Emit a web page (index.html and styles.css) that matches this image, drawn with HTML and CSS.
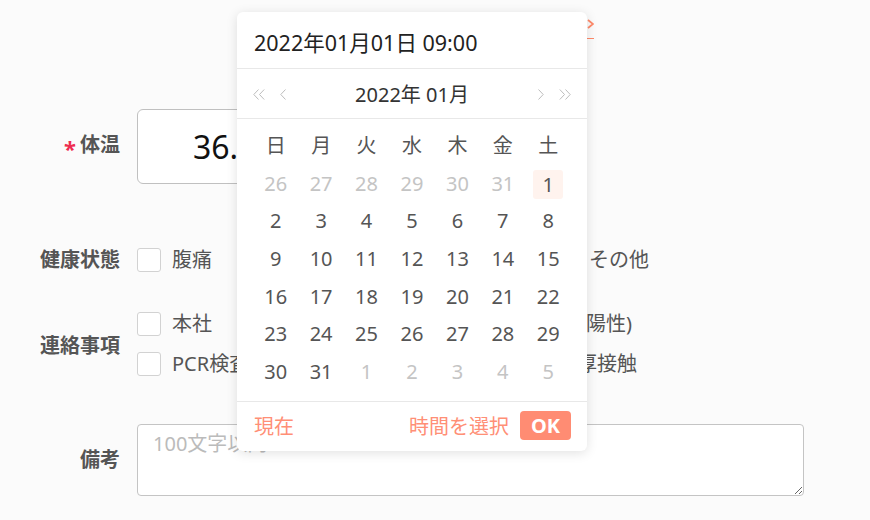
FILE: index.html
```html
<!DOCTYPE html>
<html lang="ja">
<head>
<meta charset="utf-8">
<title>体温入力</title>
<link rel="stylesheet" href="styles.css">
</head>
<body>
<main class="form">
  <div class="top-bar">
    <a class="copy-link" href="#">前回値を反映
      <svg class="chev" width="7" height="10" viewBox="0 0 7 10"><path d="M1 1 L6 5 L1 9" fill="none" stroke="#ff8a6a" stroke-width="1.8"/></svg>
    </a>
  </div>

  <div class="row row-temp">
    <div class="label"><span class="req">*</span>体温</div>
    <div class="field"><input class="temp-input" type="text" value="36.5"></div>
  </div>

  <div class="row row-health">
    <div class="label">健康状態</div>
    <div class="options">
      <div class="line line-health">
        <label class="opt"><span class="cb"></span>腹痛</label>
        <label class="opt"><span class="cb"></span>その他</label>
      </div>
    </div>
  </div>

  <div class="row row-contact">
    <div class="label label-contact">連絡事項</div>
    <div class="options">
      <div class="line line-a">
        <label class="opt"><span class="cb"></span>本社</label>
        <label class="opt"><span class="cb"></span>家族(陽性)</label>
      </div>
      <div class="line line-b">
        <label class="opt"><span class="cb"></span>PCR検査</label>
        <label class="opt"><span class="cb"></span>濃厚接触</label>
      </div>
    </div>
  </div>

  <div class="row row-note">
    <div class="label">備考</div>
    <textarea class="note" placeholder="100文字以内"></textarea>
  </div>
</main>

<div class="picker">
  <div class="picker-head">2022年01月01日 09:00</div>
  <div class="picker-nav">
    <div class="nav-group">
      <svg width="12" height="11" viewBox="0 0 12 11"><path d="M5.5 0.5 L0.8 5.5 L5.5 10.5 M11.2 0.5 L6.5 5.5 L11.2 10.5" fill="none" stroke="#bdbdbd" stroke-width="1"/></svg>
      <svg width="6" height="11" viewBox="0 0 6 11"><path d="M5.5 0.5 L0.8 5.5 L5.5 10.5" fill="none" stroke="#bdbdbd" stroke-width="1"/></svg>
    </div>
    <div class="nav-title">2022年 01月</div>
    <div class="nav-group">
      <svg width="6" height="11" viewBox="0 0 6 11"><path d="M0.5 0.5 L5.2 5.5 L0.5 10.5" fill="none" stroke="#bdbdbd" stroke-width="1"/></svg>
      <svg width="12" height="11" viewBox="0 0 12 11"><path d="M0.8 0.5 L5.5 5.5 L0.8 10.5 M6.5 0.5 L11.2 5.5 L6.5 10.5" fill="none" stroke="#bdbdbd" stroke-width="1"/></svg>
    </div>
  </div>
  <div class="cal">
    <div class="c wd"><span>日</span></div><div class="c wd"><span>月</span></div><div class="c wd"><span>火</span></div><div class="c wd"><span>水</span></div><div class="c wd"><span>木</span></div><div class="c wd"><span>金</span></div><div class="c wd"><span>土</span></div>
    <div class="c o"><span>26</span></div><div class="c o"><span>27</span></div><div class="c o"><span>28</span></div><div class="c o"><span>29</span></div><div class="c o"><span>30</span></div><div class="c o"><span>31</span></div><div class="c sel"><span>1</span></div>
    <div class="c"><span>2</span></div><div class="c"><span>3</span></div><div class="c"><span>4</span></div><div class="c"><span>5</span></div><div class="c"><span>6</span></div><div class="c"><span>7</span></div><div class="c"><span>8</span></div>
    <div class="c"><span>9</span></div><div class="c"><span>10</span></div><div class="c"><span>11</span></div><div class="c"><span>12</span></div><div class="c"><span>13</span></div><div class="c"><span>14</span></div><div class="c"><span>15</span></div>
    <div class="c"><span>16</span></div><div class="c"><span>17</span></div><div class="c"><span>18</span></div><div class="c"><span>19</span></div><div class="c"><span>20</span></div><div class="c"><span>21</span></div><div class="c"><span>22</span></div>
    <div class="c"><span>23</span></div><div class="c"><span>24</span></div><div class="c"><span>25</span></div><div class="c"><span>26</span></div><div class="c"><span>27</span></div><div class="c"><span>28</span></div><div class="c"><span>29</span></div>
    <div class="c"><span>30</span></div><div class="c"><span>31</span></div><div class="c o"><span>1</span></div><div class="c o"><span>2</span></div><div class="c o"><span>3</span></div><div class="c o"><span>4</span></div><div class="c o"><span>5</span></div>
  </div>
  <div class="picker-foot">
    <span class="now">現在</span>
    <div class="foot-right">
      <span class="pick-time">時間を選択</span>
      <button class="ok" type="button">OK</button>
    </div>
  </div>
</div>
</body>
</html>
```

FILE: styles.css
```css
html, body {
  margin: 0;
  background: #fbfbfb;
}
body {
  width: 870px;
  height: 520px;
  overflow: hidden;
  position: relative;
  font-family: "Noto Sans", "Noto Sans CJK JP", sans-serif;
  color: #555;
}

.form {
  display: flex;
  flex-direction: column;
}

.top-bar {
  width: 594px;
  margin-top: 12px;
  display: flex;
  justify-content: flex-end;
}
.copy-link {
  display: flex;
  align-items: center;
  gap: 4px;
  height: 27px;
  box-sizing: border-box;
  color: #ff8a6a;
  font-size: 16px;
  text-decoration: none;
  border-bottom: 1px solid #ff8a6a;
}
.chev {
  display: block;
  margin-top: -3px;
}

.row {
  display: grid;
  grid-template-columns: 120px auto;
  column-gap: 17px;
  align-items: center;
}
.row-temp { margin-top: 70px; }
.row-health { margin-top: 64px; }
.row-contact { margin-top: 40px; }
.row-note { margin-top: 48px; }

.label {
  text-align: right;
  font-size: 20px;
  font-weight: 700;
  color: #555;
  line-height: 1;
  white-space: nowrap;
}
.label-contact {
  padding-top: 4px;
}
.req {
  color: #ee2d4f;
  font-size: 22px;
  margin-right: 4px;
  vertical-align: -5px;
}

.field {
  display: flex;
  align-items: center;
}
.temp-input {
  width: 300px;
  height: 75px;
  box-sizing: border-box;
  border: 1px solid #c0c0c0;
  border-radius: 6px;
  background: #fff;
  padding: 0 0 0 55px;
  margin: 0;
  font-family: "Noto Sans", "Noto Sans CJK JP", sans-serif;
  font-size: 32px;
  color: #111;
  outline: none;
}

.options {
  display: flex;
  flex-direction: column;
  gap: 16px;
}
.line {
  display: flex;
}
.opt {
  display: flex;
  align-items: center;
  gap: 11px;
  font-size: 20px;
  line-height: 24px;
  color: #555;
  white-space: nowrap;
  flex: none;
}
.line-health .opt:first-child { width: 417px; }
.line-a .opt:first-child { width: 368px; }
.line-b .opt:first-child { width: 385px; }
.cb {
  width: 24px;
  height: 24px;
  box-sizing: border-box;
  border: 1px solid #d2d2d2;
  border-radius: 3px;
  background: #fff;
  flex: none;
}

.note {
  display: block;
  width: 667px;
  height: 72px;
  box-sizing: border-box;
  margin: 0;
  padding: 8px 15px 4px;
  border: 1px solid #c4c4c4;
  border-radius: 4px;
  background: #fff;
  font-family: "Noto Sans", "Noto Sans CJK JP", sans-serif;
  font-size: 20px;
  line-height: 22px;
  color: #333;
  outline: none;
}
.note::placeholder {
  color: #bbb;
}

/* date picker overlay */
.picker {
  position: absolute;
  left: 237px;
  top: 12px;
  width: 350px;
  background: #fff;
  border-radius: 6px;
  box-shadow: 0 2px 12px rgba(0, 0, 0, 0.12);
  color: #555;
}
.picker-head {
  height: 57px;
  box-sizing: border-box;
  padding: 2px 0 0 17px;
  display: flex;
  align-items: center;
  font-size: 21.5px;
  color: #222;
  border-bottom: 1px solid #e8e8e8;
}
.picker-nav {
  height: 50px;
  box-sizing: border-box;
  padding: 0 16px 1px;
  display: flex;
  align-items: center;
  justify-content: space-between;
  border-bottom: 1px solid #e8e8e8;
}
.nav-group {
  display: flex;
  align-items: center;
  gap: 15px;
}
.nav-group svg {
  display: block;
  margin-top: 2px;
}
.nav-title {
  font-size: 20px;
  color: #333;
}

.cal {
  display: grid;
  grid-template-columns: repeat(7, 1fr);
  grid-auto-rows: 37.6px;
  padding: 8px 16px 11px;
  border-bottom: 1px solid #e8e8e8;
}
.c {
  display: flex;
  align-items: center;
  justify-content: center;
}
.c span {
  display: block;
  width: 30px;
  height: 29px;
  line-height: 29px;
  text-align: center;
  font-size: 20px;
  color: #555;
  border-radius: 3px;
}
.c.o span {
  color: #c4c4c4;
}
.c.sel span {
  background: #fff3ee;
  margin-top: 2px;
}

.picker-foot {
  height: 49px;
  box-sizing: border-box;
  padding: 0 16px 2px 17px;
  display: flex;
  align-items: center;
  justify-content: space-between;
}
.now, .pick-time {
  font-size: 20px;
  color: #ff8f76;
}
.foot-right {
  display: flex;
  align-items: center;
  gap: 11px;
}
.ok {
  height: 29px;
  padding: 0 11px;
  margin: 0;
  border: none;
  border-radius: 4px;
  background: #ff8c73;
  color: #fff;
  font-family: "Noto Sans", sans-serif;
  font-weight: 700;
  font-size: 20px;
  line-height: 29px;
}
```
